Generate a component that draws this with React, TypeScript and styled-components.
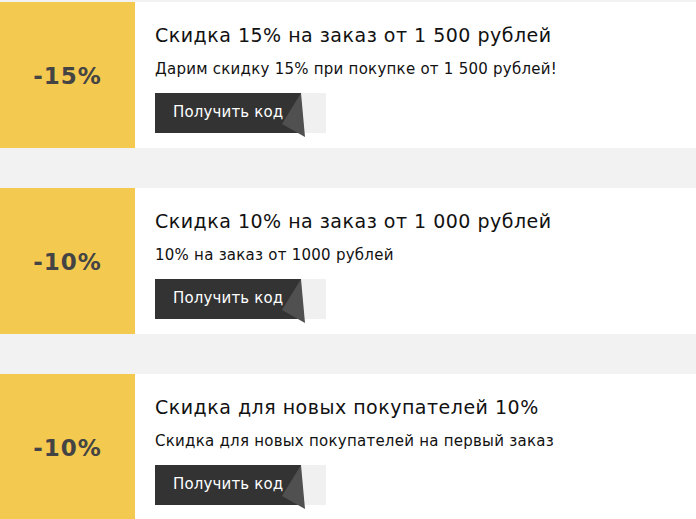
import React from "react";
import styled, { createGlobalStyle } from "styled-components";

const Global = createGlobalStyle`
  html, body { margin: 0; padding: 0; background: #f2f2f2; }
  body { font-family: "DejaVu Sans", Verdana, sans-serif; }
`;

const List = styled.div`
  display: flex;
  flex-direction: column;
  gap: 40px;
  padding-top: 2px;
`;

const Card = styled.div`
  display: flex;
  height: 146px;
  background: #fff;
`;

const Badge = styled.div`
  width: 135px;
  flex: none;
  background: #f4c94f;
  color: #444;
  font-weight: bold;
  font-size: 23px;
  letter-spacing: 1px;
  display: flex;
  align-items: center;
  justify-content: center;
  padding-top: 1px;
`;

const Body = styled.div`
  display: flex;
  flex-direction: column;
  padding: 21px 0 0 20px;
`;

const Title = styled.div`
  font-size: 19px;
  letter-spacing: 0.5px;
  color: #111;
  line-height: 24px;
`;

const Desc = styled.div`
  font-size: 15px;
  letter-spacing: 0.25px;
  color: #111;
  line-height: 18px;
  margin-top: 13px;
`;

const ButtonWrap = styled.div`
  position: relative;
  margin-top: 15px;
  width: 171px;
  height: 40px;
  background: #f0f0f0;
`;

const ButtonFace = styled.div`
  width: 146px;
  height: 40px;
  box-sizing: border-box;
  background: #333;
  color: #fff;
  font-size: 15px;
  letter-spacing: 0.15px;
  display: flex;
  align-items: center;
  padding-left: 18px;
  padding-bottom: 2px;
`;

const Fold = styled.svg`
  position: absolute;
  left: 126px;
  top: 0;
  overflow: visible;
`;

const items = [
  { pct: "-15%", title: "Скидка 15% на заказ от 1 500 рублей", desc: "Дарим скидку 15% при покупке от 1 500 рублей!" },
  { pct: "-10%", title: "Скидка 10% на заказ от 1 000 рублей", desc: "10% на заказ от 1000 рублей" },
  { pct: "-10%", title: "Скидка для новых покупателей 10%", desc: "Скидка для новых покупателей на первый заказ" },
];

export default function App() {
  return (
    <>
      <Global />
      <List>
        {items.map((it, i) => (
          <Card key={i}>
            <Badge>{it.pct}</Badge>
            <Body>
              <Title>{it.title}</Title>
              <Desc>{it.desc}</Desc>
              <ButtonWrap>
                <ButtonFace>Получить код</ButtonFace>
                <Fold width="26" height="45" viewBox="0 0 26 45">
                  <polygon points="20,0 24,44 1,31" fill="#505050" />
                </Fold>
              </ButtonWrap>
            </Body>
          </Card>
        ))}
      </List>
    </>
  );
}
